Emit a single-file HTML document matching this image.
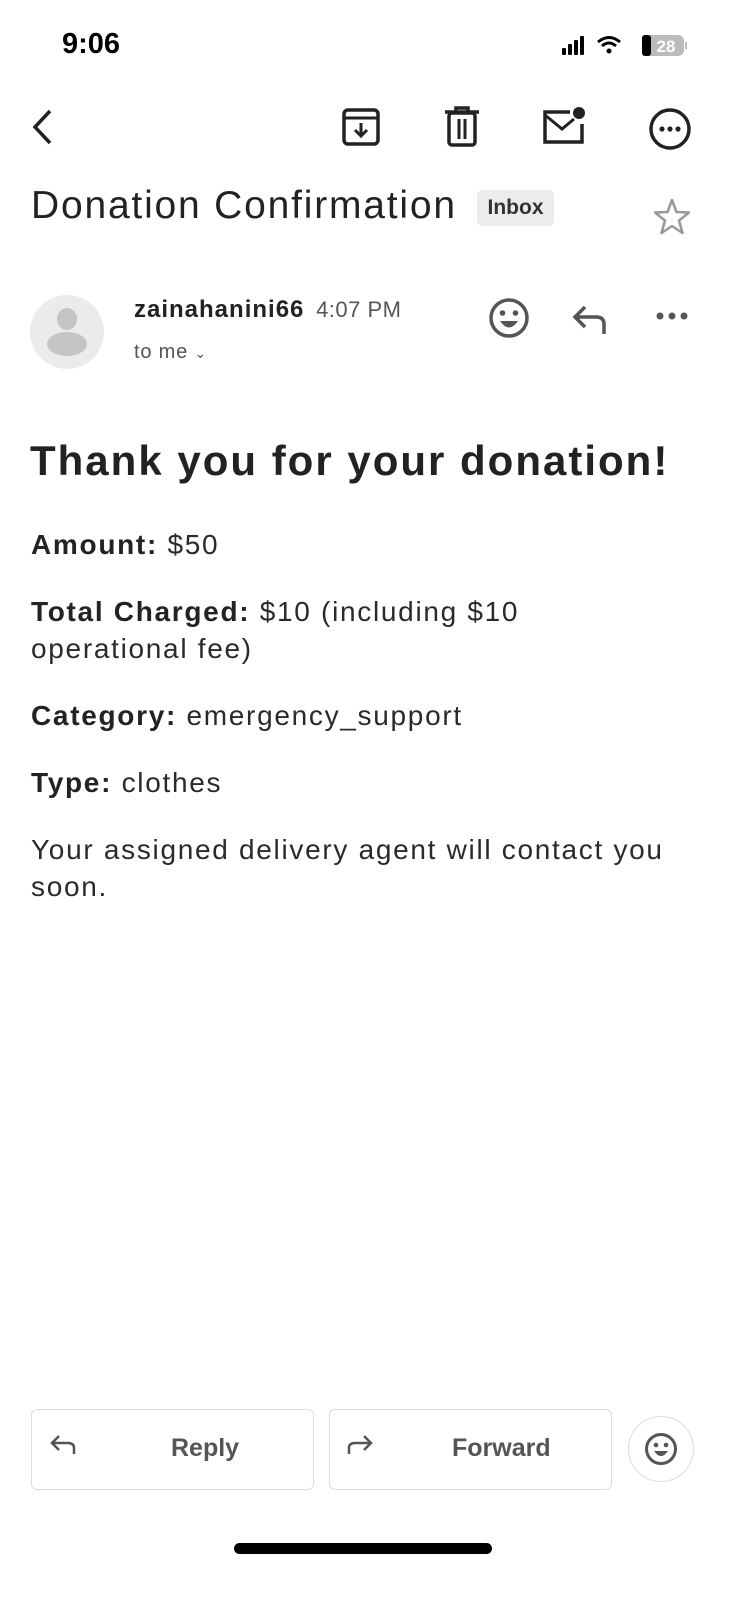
<!DOCTYPE html>
<html><head><meta charset="utf-8"><style>
*{margin:0;padding:0;box-sizing:border-box}
body{width:739px;height:1600px;background:#fff;position:relative;overflow:hidden;font-family:"Liberation Sans",Arial,sans-serif;color:#222}
.a{position:absolute}
.p{position:absolute;left:31px;font-size:28px;letter-spacing:1.7px;color:#2a2a2a;white-space:nowrap}
.p b{font-weight:900;color:#222}
</style></head><body>
<div class="a" style="left:62px;top:28px;font-size:29px;font-weight:700;color:#000">9:06</div>
<svg class="a" style="left:560px;top:34px" width="130" height="26" viewBox="0 0 130 26">
<rect x="2" y="14" width="4" height="7" rx="1" fill="#000"/><rect x="8" y="10" width="4" height="11" rx="1" fill="#000"/><rect x="14" y="6" width="4" height="15" rx="1" fill="#000"/><rect x="20" y="2" width="4" height="19" rx="1" fill="#000"/>
<path d="M38 8 Q49 -1 60 8" stroke="#000" stroke-width="3" fill="none"/><path d="M42 12 Q49 6 56 12" stroke="#000" stroke-width="3" fill="none"/><circle cx="49" cy="17" r="2.5" fill="#000"/>
<rect x="82" y="1" width="42" height="21" rx="6" fill="#bbb"/><rect x="82" y="1" width="9" height="21" rx="3" fill="#000"/>
<text x="106" y="18" font-size="17" font-weight="700" fill="#fff" text-anchor="middle" font-family="Liberation Sans">28</text>
<rect x="125" y="8" width="2" height="7" fill="#bbb"/></svg>
<svg class="a" style="left:28px;top:108px" width="28" height="40"><path d="M22 3 L7 19 L22 35" stroke="#222" stroke-width="3.5" fill="none"/></svg>
<svg class="a" style="left:340px;top:106px" width="42" height="44"><rect x="4" y="4" width="34" height="34" rx="4" stroke="#222" stroke-width="3.5" fill="none"/><line x1="4" y1="12" x2="38" y2="12" stroke="#222" stroke-width="3"/><path d="M21 17 V29 M15 24 L21 30 L27 24" stroke="#222" stroke-width="3" fill="none"/></svg>
<svg class="a" style="left:442px;top:106px" width="40" height="44"><path d="M3 6 H37 M14 6 V2 H26 V6" stroke="#222" stroke-width="3.5" fill="none"/><rect x="7" y="7" width="26" height="32" rx="3" stroke="#222" stroke-width="3.5" fill="none"/><path d="M17 13 V33 M23 13 V33" stroke="#222" stroke-width="3"/></svg>
<svg class="a" style="left:540px;top:104px" width="48" height="44"><path d="M30 8 H5 V38 H42 V20" stroke="#222" stroke-width="3.5" fill="none"/><path d="M5 11 L22 25 L34 15" stroke="#222" stroke-width="3" fill="none"/><circle cx="39" cy="9" r="6" fill="#222"/></svg>
<svg class="a" style="left:647px;top:106px" width="46" height="46"><circle cx="23" cy="23" r="19" stroke="#222" stroke-width="3.5" fill="none"/><circle cx="15" cy="23" r="2.6" fill="#222"/><circle cx="23" cy="23" r="2.6" fill="#222"/><circle cx="31" cy="23" r="2.6" fill="#222"/></svg>
<div class="a" style="left:31px;top:184px;font-size:39px;letter-spacing:1.8px;color:#222">Donation Confirmation</div>
<div class="a" style="left:477px;top:190px;width:77px;height:36px;background:#ececec;border-radius:5px;font-size:21px;font-weight:700;color:#333;text-align:center;line-height:36px">Inbox</div>
<svg class="a" style="left:652px;top:197px" width="40" height="40"><path d="M20 3 L24.5 15 L37 15.5 L27 23.5 L30.5 36 L20 29 L9.5 36 L13 23.5 L3 15.5 L15.5 15 Z" stroke="#999" stroke-width="2.5" fill="none" stroke-linejoin="round"/></svg>
<div class="a" style="left:30px;top:295px;width:74px;height:74px;border-radius:50%;background:#ebebeb"></div>
<div class="a" style="left:57px;top:308px;width:20px;height:22px;border-radius:50%;background:#c4c4c4"></div>
<div class="a" style="left:47px;top:332px;width:40px;height:24px;border-radius:50%;background:#c4c4c4"></div>
<div class="a" style="left:134px;top:296px;font-size:24px;letter-spacing:1px;font-weight:700;color:#222;white-space:nowrap">zainahanini66 <span style="font-weight:400;color:#555;font-size:22px;margin-left:4px;letter-spacing:0.5px">4:07 PM</span></div>
<div class="a" style="left:134px;top:341px;font-size:20px;letter-spacing:0.8px;color:#555">to me <span style="font-size:14px">&#8964;</span></div>
<svg class="a" style="left:487px;top:296px" width="44" height="44"><circle cx="22" cy="22" r="18" stroke="#555" stroke-width="3.5" fill="none"/><circle cx="15.5" cy="17" r="2.8" fill="#555"/><circle cx="28.5" cy="17" r="2.8" fill="#555"/><path d="M13 25 H31 Q22 38 13 25Z" fill="#555"/></svg>
<svg class="a" style="left:570px;top:300px" width="40" height="36"><path d="M34 34 V24 Q34 17 26 17 H6 M15 7 L5 17 L15 27" stroke="#555" stroke-width="3.5" fill="none"/></svg>
<svg class="a" style="left:654px;top:308px" width="36" height="16"><circle cx="6" cy="8" r="3.5" fill="#555"/><circle cx="18" cy="8" r="3.5" fill="#555"/><circle cx="30" cy="8" r="3.5" fill="#555"/></svg>
<div class="a" style="left:30px;top:437px;font-size:42px;font-weight:900;color:#222;letter-spacing:2px;white-space:nowrap">Thank you for your donation!</div>
<div class="p" style="top:529px"><b>Amount:</b> $50</div>
<div class="p" style="top:596px"><b>Total Charged:</b> $10 (including $10</div>
<div class="p" style="top:633px">operational fee)</div>
<div class="p" style="top:700px"><b>Category:</b> emergency_support</div>
<div class="p" style="top:767px"><b>Type:</b> clothes</div>
<div class="p" style="top:834px">Your assigned delivery agent will contact you</div>
<div class="p" style="top:871px">soon.</div>
<div class="a" style="left:31px;top:1409px;width:283px;height:81px;border:1.5px solid #ddd;border-radius:6px"></div>
<div class="a" style="left:329px;top:1409px;width:283px;height:81px;border:1.5px solid #ddd;border-radius:6px"></div>
<svg class="a" style="left:48px;top:1428px" width="30" height="28"><path d="M26 26 V20 Q26 15 20 15 H4 M11 8 L4 15 L11 22" stroke="#555" stroke-width="2.5" fill="none"/></svg>
<svg class="a" style="left:345px;top:1428px" width="30" height="28"><path d="M4 26 V20 Q4 15 10 15 H26 M19 8 L26 15 L19 22" stroke="#555" stroke-width="2.5" fill="none"/></svg>
<div class="a" style="left:171px;top:1434px;font-size:25px;font-weight:700;color:#555">Reply</div>
<div class="a" style="left:452px;top:1434px;font-size:25px;font-weight:700;color:#555">Forward</div>
<div class="a" style="left:628px;top:1416px;width:66px;height:66px;border-radius:50%;border:1.5px solid #ddd"></div>
<svg class="a" style="left:643px;top:1431px" width="36" height="36"><circle cx="18" cy="18" r="14.5" stroke="#555" stroke-width="3" fill="none"/><circle cx="13" cy="14" r="2.3" fill="#555"/><circle cx="23" cy="14" r="2.3" fill="#555"/><path d="M11 20 H25 Q18 30 11 20Z" fill="#555"/></svg>
<div class="a" style="left:234px;top:1543px;width:258px;height:11px;border-radius:6px;background:#000"></div>
</body></html>
